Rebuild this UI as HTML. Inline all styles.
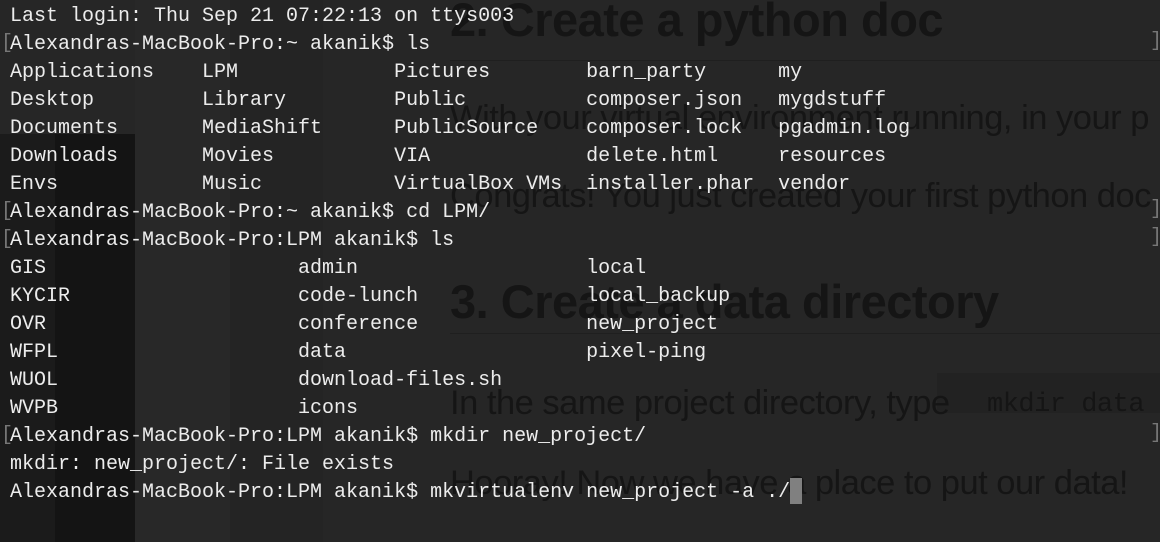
<!DOCTYPE html>
<html><head><meta charset="utf-8"><style>
html,body{margin:0;padding:0}
body{width:1160px;height:542px;background:#262626;position:relative;overflow:hidden;font-family:"Liberation Sans",sans-serif}
.bg{position:absolute}
.g{position:absolute;color:#151515;white-space:nowrap;letter-spacing:-0.5px}
.h{font-size:47px;font-weight:bold}
.p{font-size:34.5px}
.term{position:absolute;left:10px;top:3px;font-family:"Liberation Mono",monospace;font-size:20px;line-height:28px;color:#ececec;white-space:pre}
.br{position:absolute;left:1px;color:#777;font-family:"Liberation Mono",monospace;font-size:20px}
.rb{position:absolute;left:1150px;color:#777;font-family:"Liberation Mono",monospace;font-size:20px}
</style></head><body>
<div class="bg" style="left:0;top:134px;width:135px;height:408px;background:#141414"></div>
<div class="bg" style="left:0;top:134px;width:55px;height:408px;background:#1b1b1b"></div>
<div class="bg" style="left:135px;top:0;width:95px;height:542px;background:#282828"></div>
<div class="bg" style="left:230px;top:0;width:93px;height:542px;background:#242424"></div>
<div class="bg" style="left:450px;top:60px;width:710px;height:1px;background:#1f1f1f"></div>
<div class="bg" style="left:450px;top:333px;width:710px;height:1px;background:#1f1f1f"></div>
<div class="bg" style="left:937px;top:373px;width:223px;height:40px;background:#222"></div>
<div class="g h" style="left:450px;top:-8px">2. Create a python doc</div>
<div class="g p" style="left:450px;top:99px">With your virtual environment running, in your p</div>
<div class="g p" style="left:450px;top:177px">Congrats! You just created your first python doc</div>
<div class="g h" style="left:450px;top:274px">3. Create a data directory</div>
<div class="g p" style="left:450px;top:384px">In the same project directory, type</div>
<div class="g" style="left:987px;top:390px;font-family:'Liberation Mono',monospace;font-size:27px">mkdir data</div>
<div class="g p" style="left:450px;top:464px">Hooray! Now we have a place to put our data!</div>
<div class="br" style="top:32px">[</div><div class="br" style="top:200px">[</div><div class="br" style="top:228px">[</div><div class="br" style="top:424px">[</div>
<div class="rb" style="top:30px">]</div><div class="rb" style="top:198px">]</div><div class="rb" style="top:226px">]</div><div class="rb" style="top:422px">]</div>
<div class="bg" style="left:790px;top:478px;width:12px;height:26px;background:#808080"></div>
<div class="term">Last login: Thu Sep 21 07:22:13 on ttys003
Alexandras-MacBook-Pro:~ akanik$ ls
Applications    LPM             Pictures        barn_party      my
Desktop         Library         Public          composer.json   mygdstuff
Documents       MediaShift      PublicSource    composer.lock   pgadmin.log
Downloads       Movies          VIA             delete.html     resources
Envs            Music           VirtualBox VMs  installer.phar  vendor
Alexandras-MacBook-Pro:~ akanik$ cd LPM/
Alexandras-MacBook-Pro:LPM akanik$ ls
GIS                     admin                   local
KYCIR                   code-lunch              local_backup
OVR                     conference              new_project
WFPL                    data                    pixel-ping
WUOL                    download-files.sh
WVPB                    icons
Alexandras-MacBook-Pro:LPM akanik$ mkdir new_project/
mkdir: new_project/: File exists
Alexandras-MacBook-Pro:LPM akanik$ mkvirtualenv new_project -a ./</div>
</body></html>
